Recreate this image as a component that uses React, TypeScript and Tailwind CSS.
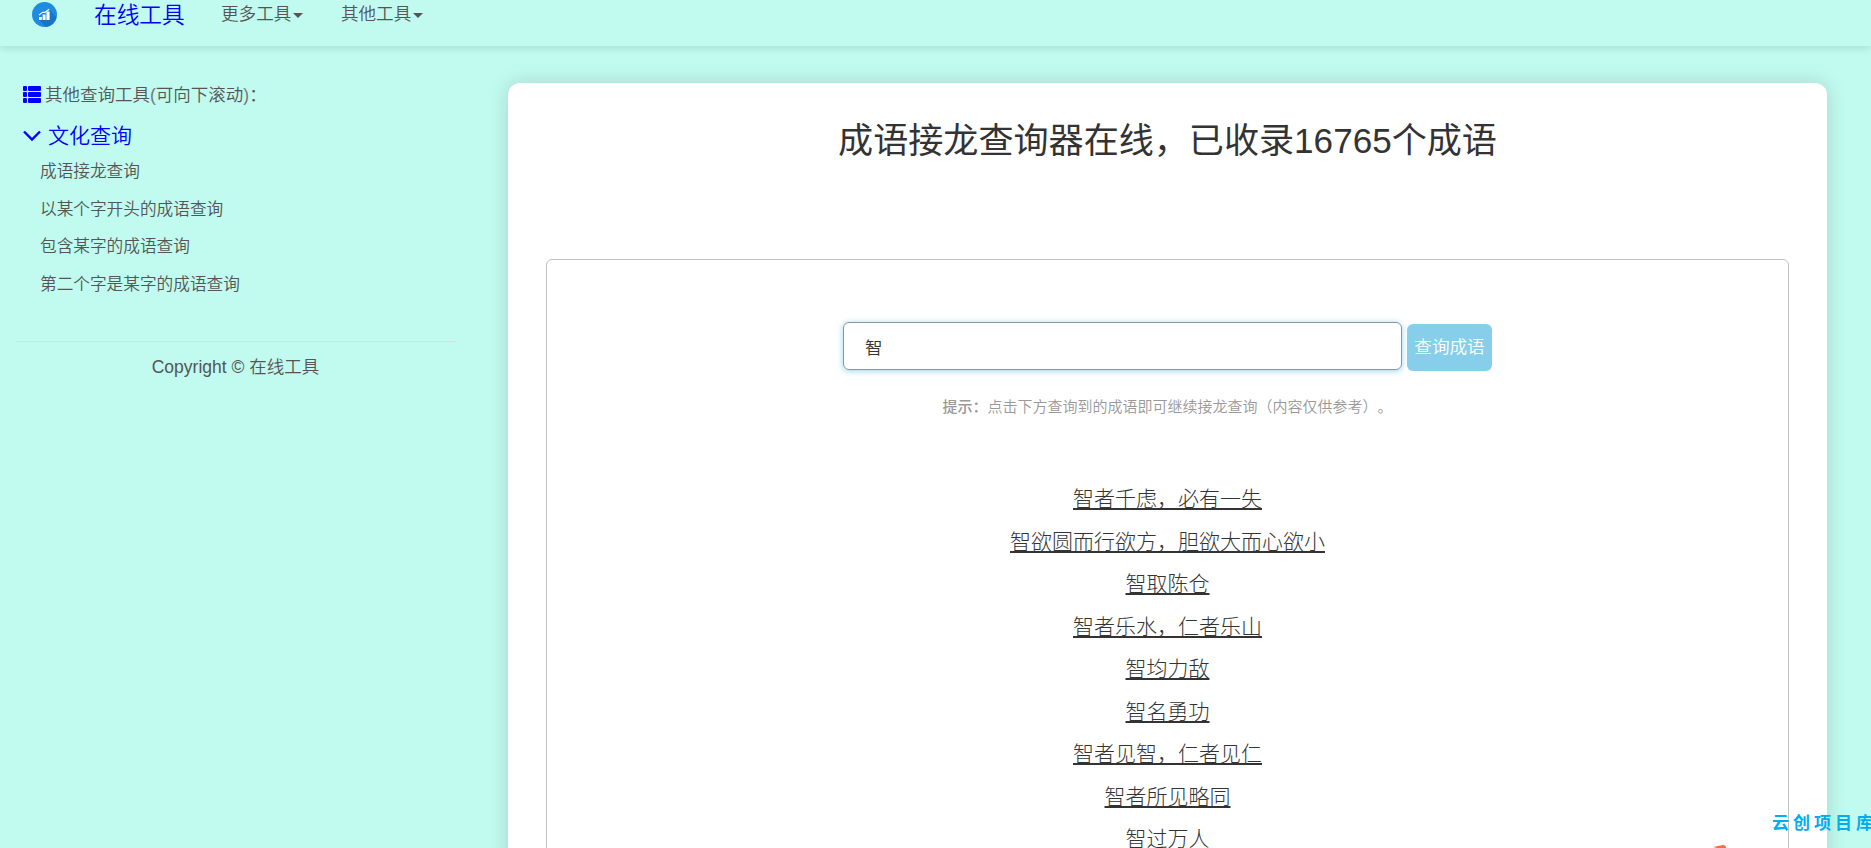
import { useState } from "react";

const tools = [
  "成语接龙查询",
  "以某个字开头的成语查询",
  "包含某字的成语查询",
  "第二个字是某字的成语查询"
];

const idioms = [
  "智者千虑，必有一失",
  "智欲圆而行欲方，胆欲大而心欲小",
  "智取陈仓",
  "智者乐水，仁者乐山",
  "智均力敌",
  "智名勇功",
  "智者见智，仁者见仁",
  "智者所见略同",
  "智过万人"
];

function Logo() {
  return (
    <svg className="w-[25px] h-[25px]" viewBox="0 0 25 25">
      <circle cx="12.5" cy="12.5" r="12.5" fill="#1e8ae0" />
      <path d="M7 18L18 8l6.5 7.5A12.5 12.5 0 0 1 14 25z" fill="#1976c4" />
      <path d="M7 15h2.8v3H7zM10.6 12.5h3V18h-3zM14.4 9.5h3.2V18h-3.2z" fill="#fff" />
      <path d="M7 13.2l3.6-3 2.2.2 4.4-3.2" stroke="#fff" strokeWidth="1.1" fill="none" />
    </svg>
  );
}

function ListIcon() {
  return (
    <svg className="w-[18px] h-[17px]" viewBox="0 0 18 17" fill="#00f">
      <rect x="0" y="0" width="4" height="5" rx="1" />
      <rect x="0" y="6" width="4" height="5" rx="1" />
      <rect x="0" y="12" width="4" height="5" rx="1" />
      <rect x="5" y="0" width="13" height="5" rx="1" />
      <rect x="5" y="6" width="13" height="5" rx="1" />
      <rect x="5" y="12" width="13" height="5" rx="1" />
    </svg>
  );
}

function NavItem({ label }: { label: string }) {
  return (
    <a href="#" className="flex items-center text-[17.6px] leading-7">
      {label}
      <span className="ml-0.5 mt-[3px] border-x-[5px] border-t-[5px] border-x-transparent border-t-[#555]" />
    </a>
  );
}

function Header() {
  return (
    <nav className="flex items-start h-[46px] pl-8 shadow-[0_2px_8px_rgba(0,0,0,0.12)]">
      <div className="mt-0.5">
        <Logo />
      </div>
      <a href="#" className="ml-[37px] -mt-px w-[90px] text-[22.7px] leading-8 text-[#00f] whitespace-nowrap">
        在线工具
      </a>
      <div className="flex gap-[37.5px] ml-[37px]">
        <NavItem label="更多工具" />
        <NavItem label="其他工具" />
      </div>
    </nav>
  );
}

function Sidebar() {
  return (
    <aside className="w-[441px] shrink-0 ml-[15px] pt-9">
      <div className="flex items-center pl-2 h-6 text-[17.5px]">
        <ListIcon />
        <span className="ml-1 mt-0.5">其他查询工具<span className="text-[#777]">(</span>可向下滚动<span className="text-[#777]">)</span>：</span>
      </div>
      <div className="flex items-center pl-2 mt-[15px] h-[30px] text-[21px] text-[#00f]">
        <svg className="w-[18px] h-3" viewBox="0 0 18 12" fill="none" stroke="#00f" strokeWidth="2.4">
          <path d="M1 1.5l8 8 8-8" />
        </svg>
        <span className="ml-[7px]">文化查询</span>
      </div>
      <ul className="pl-[25px] pt-0.5 text-[16.67px]">
        {tools.map((tool) => (
          <li key={tool} className="flex items-center h-[37.6px]">
            <a href="#">{tool}</a>
          </li>
        ))}
      </ul>
      <div className="mt-[38px] border-t border-[#ddd] pt-[13px] text-center text-[17.5px] leading-[25px]">
        Copyright © 在线工具
      </div>
    </aside>
  );
}

export default function App() {
  const [word, setWord] = useState("智");

  return (
    <div className="relative w-full h-[848px] overflow-hidden bg-[#c1faef] text-[#555] font-[350] [text-spacing-trim:space-all] font-['Liberation_Sans','Noto_Sans_CJK_SC',sans-serif]">
      <Header />
      <div className="flex">
        <Sidebar />
        <main className="w-[1319px] h-[900px] shrink-0 ml-[52px] mt-[37px] px-[38px] rounded-xl bg-white text-[#333] shadow-[0_0_20px_rgba(0,0,0,0.15)]">
          <h1 className="pt-[38px] text-center text-[35.1px] leading-10 font-normal">
            成语接龙查询器在线，已收录16765个成语
          </h1>
          <section className="mt-[98px] h-[720px] rounded-md border border-[#c3c3c3] pt-[62px]">
            <div className="flex justify-center gap-[5px]">
              <input
                value={word}
                onChange={(e) => setWord(e.target.value)}
                className="w-[559px] h-12 px-[21px] rounded-md border border-[#8a959c] text-[17.5px] outline-none shadow-[0_1px_6px_rgba(135,206,235,0.9)]"
              />
              <button className="mt-0.5 w-[85px] h-[47px] rounded-md bg-[#87ceeb] text-[17.6px] text-white">
                查询成语
              </button>
            </div>
            <p className="mt-6 text-center text-[15px] leading-6 text-[#999]">
              <b className="font-medium">提示：</b>点击下方查询到的成语即可继续接龙查询（内容仅供参考）。
            </p>
            <ul className="mt-[59px] text-center text-[21px] font-light">
              {idioms.map((idiom) => (
                <li key={idiom} className="h-[42.5px] leading-[42.5px]">
                  <a href="#" className="underline decoration-2 underline-offset-2">{idiom}</a>
                </li>
              ))}
            </ul>
          </section>
        </main>
      </div>
      <div className="absolute left-[1772px] top-[812px] whitespace-nowrap text-[17px] leading-6 tracking-[4px] font-bold text-[#00aeef]">
        云创项目库
      </div>
      <svg className="absolute left-[1713px] top-[845px] w-[14px] h-[3px]" viewBox="0 0 14 3">
        <path d="M0 2L10 0Q13 0 13 3H4z" fill="#f76b3c" />
      </svg>
    </div>
  );
}
